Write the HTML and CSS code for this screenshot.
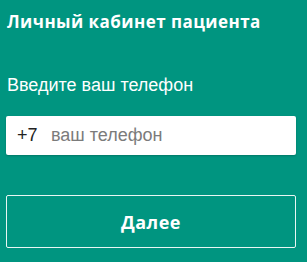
FILE: index.html
```html
<!DOCTYPE html>
<html lang="ru">
<head>
<meta charset="utf-8">
<link rel="stylesheet" href="styles.css">
</head>
<body>
<div class="panel">
  <h1 class="title">Личный кабинет пациента</h1>
  <label class="label" for="phone">Введите ваш телефон</label>
  <div class="field">
    <span class="prefix">+7</span>
    <input id="phone" class="input" type="text" placeholder="ваш телефон">
  </div>
  <button class="btn" type="button">Далее</button>
</div>
</body>
</html>
```
FILE: styles.css
```css
html, body {
  margin: 0;
  padding: 0;
  background: #009580;
}
.panel {
  width: 307px;
  height: 262px;
  box-sizing: border-box;
  padding: 11px 11px 0 6px;
  display: flex;
  flex-direction: column;
  font-family: "Liberation Sans", Arial, sans-serif;
  color: #fff;
}
.title {
  margin: 0 0 0 1px;
  font-family: "Open Sans", sans-serif;
  font-weight: 700;
  font-size: 17px;
  line-height: 22px;
  letter-spacing: 0.45px;
  white-space: nowrap;
}
.label {
  margin: 42px 0 0 1px;
  font-size: 18px;
  line-height: 20px;
}
.field {
  margin-top: 21px;
  height: 39px;
  background: #fff;
  border-radius: 2px;
  box-shadow: 0 1px 2px rgba(0,0,0,0.2);
  display: flex;
  align-items: center;
  padding-left: 11px;
}
.prefix {
  color: #222;
  font-size: 18px;
  width: 34px;
}
.input {
  border: none;
  outline: none;
  background: transparent;
  font-family: "Liberation Sans", Arial, sans-serif;
  font-size: 18px;
  color: #222;
  padding: 0;
  flex: 1;
  min-width: 0;
}
.input::placeholder {
  color: #7b7b7b;
}
.btn {
  margin-top: 40px;
  height: 53px;
  background: transparent;
  border: 1px solid #e8f6f3;
  border-radius: 2px;
  color: #fff;
  font-family: "Open Sans", sans-serif;
  font-weight: 700;
  font-size: 18px;
  letter-spacing: 0.5px;
  padding: 0;
}
```
